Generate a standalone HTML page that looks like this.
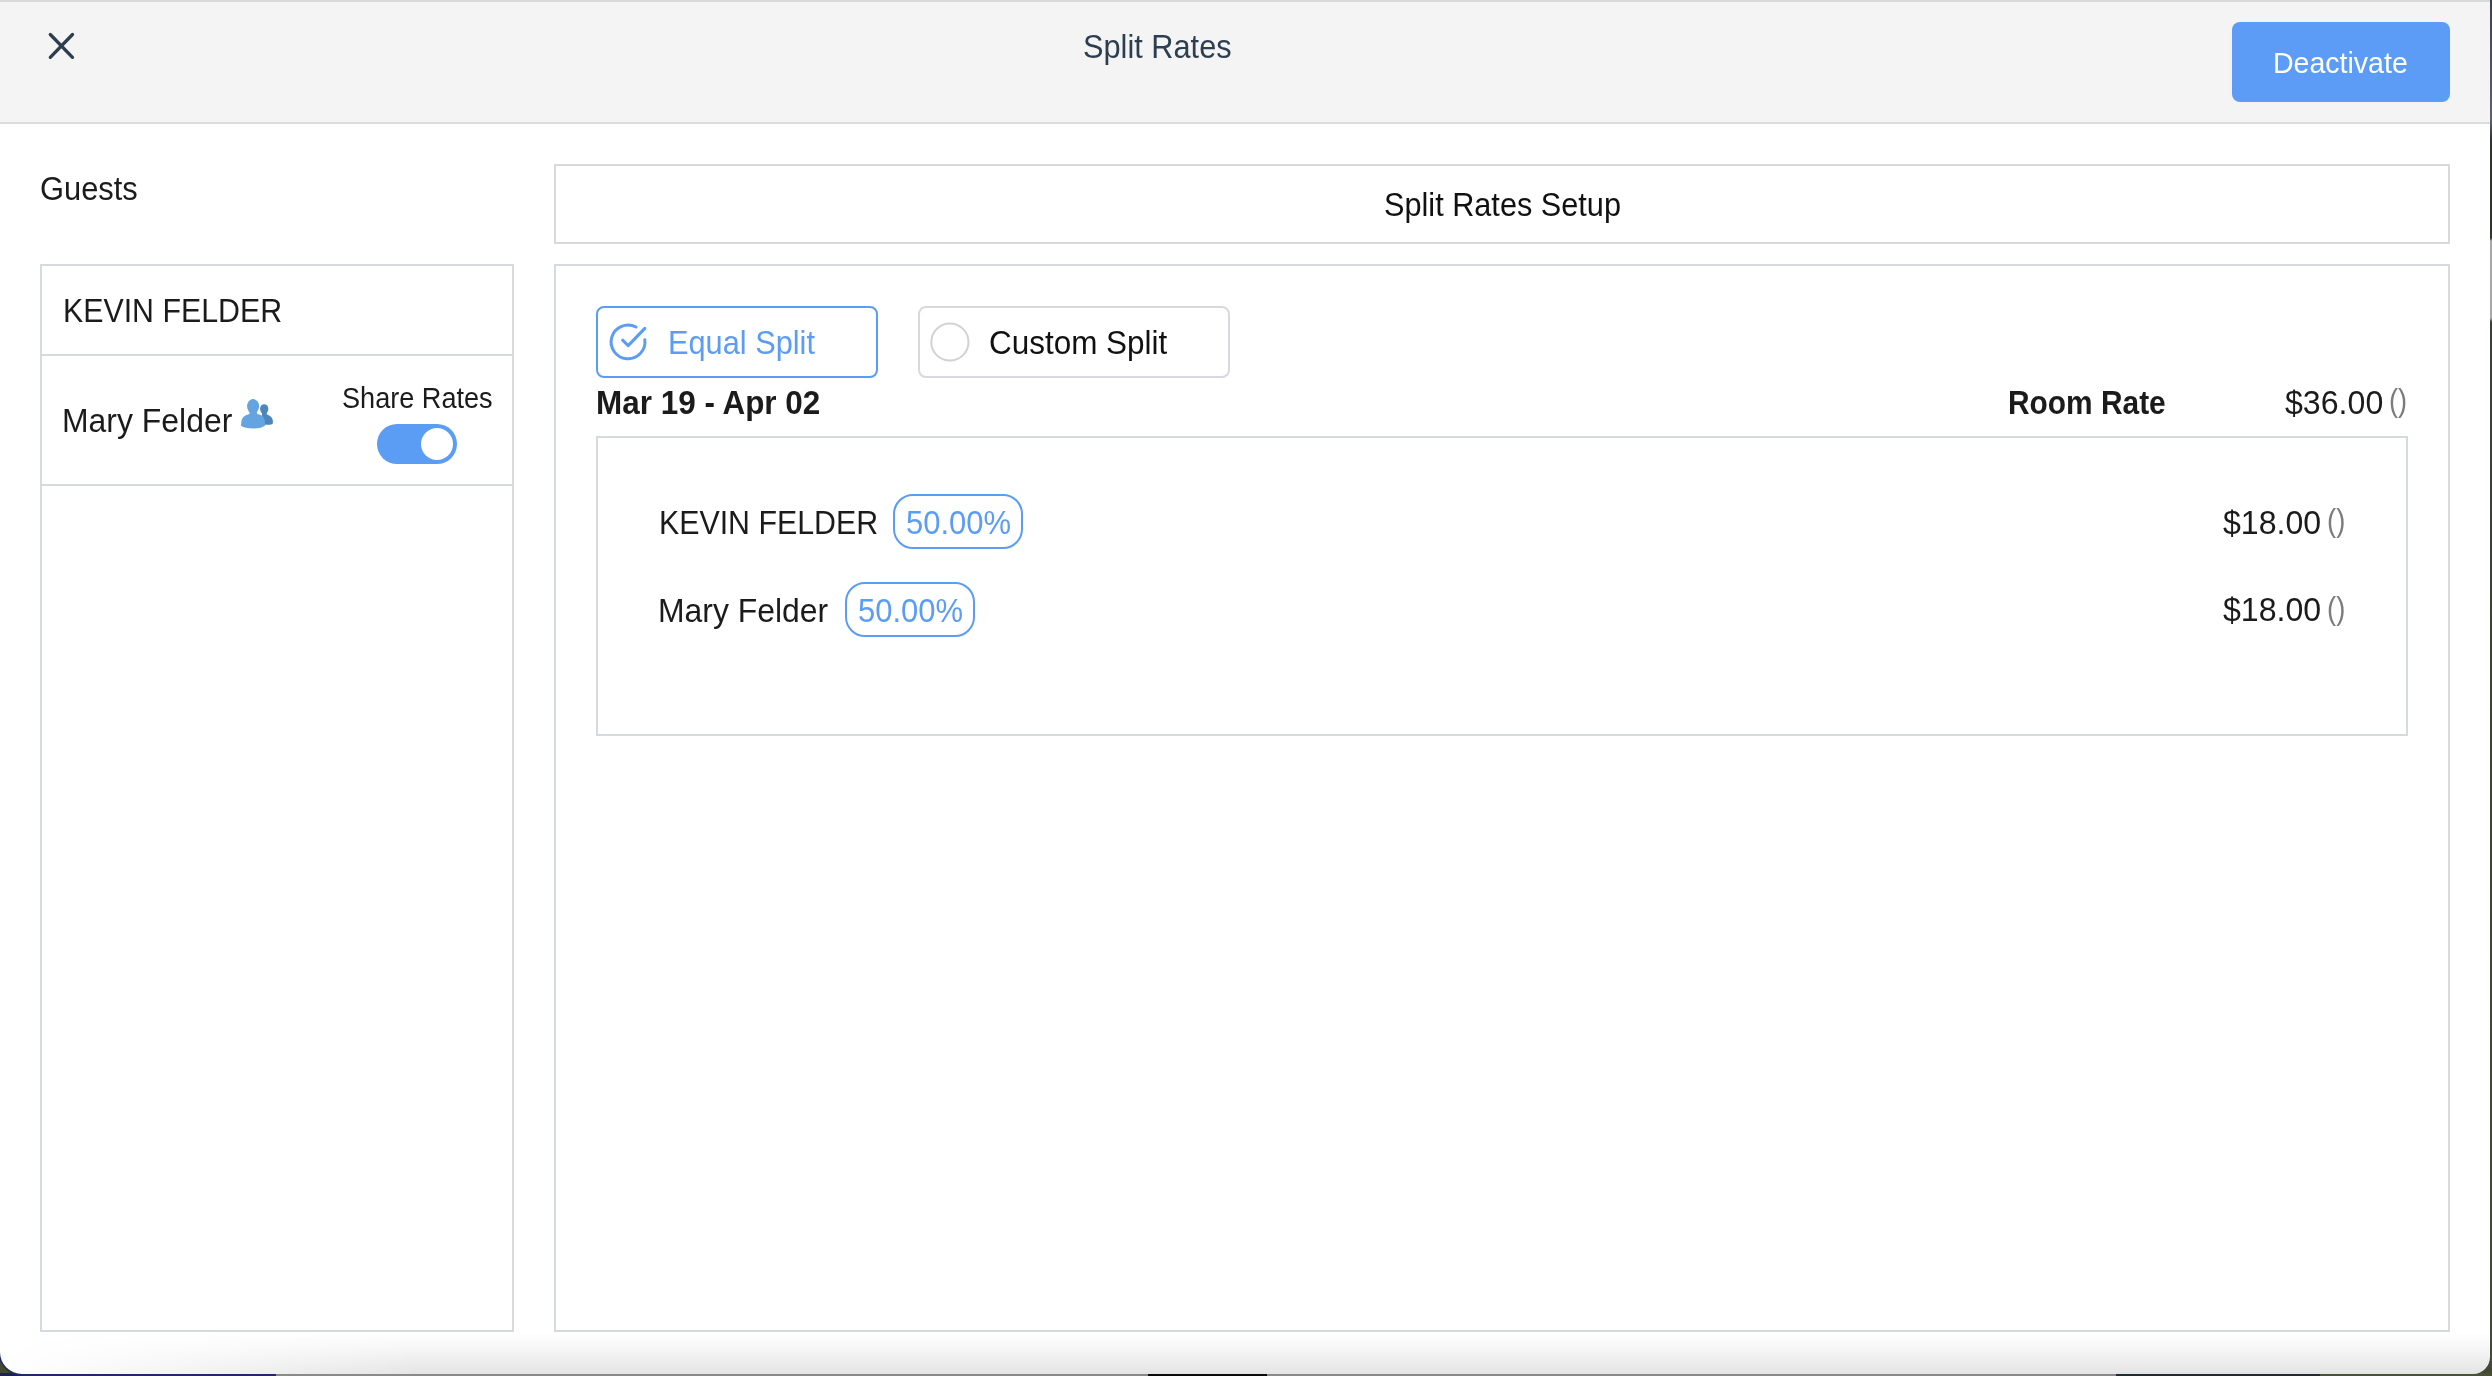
<!DOCTYPE html>
<html><head><meta charset="utf-8"><style>
html,body{margin:0;padding:0;width:2492px;height:1376px;overflow:hidden}
body{position:relative;background:#434932;font-family:"Liberation Sans",sans-serif}
.t{position:absolute;white-space:nowrap;line-height:1;transform-origin:0 0}
.b{position:absolute}
#strip{position:absolute;left:0;top:1373px;width:2492px;height:3px;background:linear-gradient(90deg,#1c2253 0,#1c2253 276px,#8a8a8a 276px,#8a8a8a 1148px,#0a0a0a 1148px,#0a0a0a 1267px,#8a8a8a 1267px,#8a8a8a 2116px,#22293a 2116px,#22293a 2320px,#4a5236 2320px)}
#rstrip{position:absolute;left:2490px;top:0;width:2px;height:1376px;background:linear-gradient(180deg,#3a4250 0,#5a6270 120px,#2e3430 140px,#2e3430 238px,#a8a8a8 241px,#a8a8a8 318px,#3a4030 322px,#444a34 1376px)}
#win{position:absolute;left:0;top:0;width:2490px;height:1373.5px;background:#fff;border-radius:0 0 17px 22px;overflow:hidden}
#hdr{position:absolute;left:0;top:0;width:2490px;height:120px;background:#f4f4f4;border-top:2px solid #d9dadb;border-bottom:2px solid #dcdddd}
#shade{position:absolute;left:0;top:1332px;width:2490px;height:42px;background:linear-gradient(180deg,rgba(0,0,0,0) 0,rgba(0,0,0,0.035) 40%,rgba(0,0,0,0.105) 100%);-webkit-mask-image:linear-gradient(90deg,transparent 0,#000 420px);mask-image:linear-gradient(90deg,transparent 0,#000 420px)}
#navyc{position:absolute;left:-2px;top:1320px;width:278px;height:56px;background:#1f2a66;border-radius:0 0 0 25px}
</style></head><body>
<div id="strip"></div><div id="rstrip"></div><div id="navyc"></div>
<div id="win">
<div id="hdr"></div>
<div id="shade"></div>
<div class="b" style="left:2232px;top:22px;width:218px;height:80px;border-radius:8px;background:#5c9cf6"></div>
<div class="b" style="left:40px;top:264px;width:470px;height:1064px;border:2px solid #d6d9de;"></div>
<div class="b" style="left:42px;top:354px;width:470px;height:2px;background:#d6d9de"></div>
<div class="b" style="left:42px;top:484px;width:470px;height:2px;background:#d6d9de"></div>
<div class="b" style="left:554px;top:164px;width:1892px;height:76px;border:2px solid #d9d9d9;"></div>
<div class="b" style="left:554px;top:264px;width:1892px;height:1064px;border:2px solid #d6d9de;"></div>
<div class="b" style="left:596px;top:306px;width:278px;height:68px;border:2px solid #5b9cf5;border-radius:8px;"></div>
<div class="b" style="left:918px;top:306px;width:308px;height:68px;border:2px solid #d8d9e0;border-radius:8px;"></div>
<div class="b" style="left:596px;top:436px;width:1808px;height:296px;border:2px solid #d6d9de;"></div>
<div class="b" style="left:893px;top:494px;width:126px;height:50.5px;border:2px solid #5b9cf5;border-radius:20px;"></div>
<div class="b" style="left:845px;top:582px;width:126px;height:50.5px;border:2px solid #5b9cf5;border-radius:20px;"></div>
<div class="b" style="left:377px;top:424px;width:80px;height:40px;border-radius:20px;background:#5b9cf5"></div>
<div class="b" style="left:420.8px;top:427.8px;width:32.2px;height:32.2px;border-radius:50%;background:#fff"></div>
<svg class="b" style="left:0;top:0" width="2492" height="1376" viewBox="0 0 2492 1376">
 <path d="M50.3 34.5 L72.5 57.3 M72.5 34.5 L50.3 57.3" stroke="#2c3e50" stroke-width="3.3" stroke-linecap="round" fill="none"/>
 <path d="M636.0 327.0 A16.9 16.9 0 1 0 644.8 339.8" stroke="#5b9cf5" stroke-width="3" stroke-linecap="round" fill="none"/>
 <path d="M622.6 340.2 L628.2 345.6 L644.8 328.4" stroke="#5b9cf5" stroke-width="3" stroke-linecap="round" stroke-linejoin="round" fill="none"/>
 <circle cx="949.9" cy="342" r="18.6" stroke="#d2d2d2" stroke-width="2" fill="none"/>
 <ellipse cx="264.2" cy="409" rx="4.15" ry="4.8" fill="#4d86b9"/>
 <path d="M262 412.5 L266.8 412.5 L266.8 414.4 C268 414.8 270 415.5 271.6 417.6 C272.8 419.3 273.2 421.5 272.8 423.4 C272 424.6 270.5 424.7 268 424.7 L262 424.7 Z" fill="#4d86b9"/>
 <ellipse cx="253.1" cy="406.3" rx="6.0" ry="7.2" fill="#64a4e0"/>
 <path d="M249.5 410 L257 410 L257 414 C258.5 414.2 260.3 414.6 262 415.8 C263.8 417.2 264.7 419 264.9 421.5 L265 425.6 C262.5 427.8 259 428.5 253.5 428.5 C247.5 428.5 243.5 427.6 241.1 425.8 C241 423.5 241.2 421.2 241.9 419.2 C242.8 417 244.8 415.3 249.5 414 Z" fill="#64a4e0"/>
</svg>
<div class="t" style="left:1082.56px;top:30.07px;font-size:33.33px;font-weight:400;color:#2c3e50;transform:scaleX(0.9221)">Split Rates</div>
<div class="t" style="left:2273.32px;top:48.07px;font-size:29.57px;font-weight:400;color:#ffffff;transform:scaleX(0.9647)">Deactivate</div>
<div class="t" style="left:39.66px;top:171.57px;font-size:33.33px;font-weight:400;color:#1b1b1b;transform:scaleX(0.9253)">Guests</div>
<div class="t" style="left:62.67px;top:293.87px;font-size:33.33px;font-weight:400;color:#1b1b1b;transform:scaleX(0.9097)">KEVIN FELDER</div>
<div class="t" style="left:62.15px;top:403.67px;font-size:33.33px;font-weight:400;color:#1b1b1b;transform:scaleX(0.9578)">Mary Felder</div>
<div class="t" style="left:341.65px;top:383.02px;font-size:29.86px;font-weight:400;color:#1b1b1b;transform:scaleX(0.9075)">Share Rates</div>
<div class="t" style="left:1383.67px;top:188.12px;font-size:33.33px;font-weight:400;color:#111111;transform:scaleX(0.9201)">Split Rates Setup</div>
<div class="t" style="left:668.34px;top:326.31px;font-size:33.04px;font-weight:400;color:#5b9cf5;transform:scaleX(0.9305)">Equal Split</div>
<div class="t" style="left:989.43px;top:325.57px;font-size:33.33px;font-weight:400;color:#111111;transform:scaleX(0.9439)">Custom Split</div>
<div class="t" style="left:595.80px;top:385.57px;font-size:33.33px;font-weight:700;color:#1b1b1b;transform:scaleX(0.9436)">Mar 19 - Apr 02</div>
<div class="t" style="left:2008.11px;top:385.57px;font-size:33.33px;font-weight:700;color:#1b1b1b;transform:scaleX(0.8965)">Room Rate</div>
<div class="t" style="left:2284.58px;top:385.57px;font-size:33.33px;font-weight:400;color:#1b1b1b;transform:scaleX(0.9638)">$36.00</div>
<div class="t" style="left:2389.27px;top:385.39px;font-size:33.33px;color:#7c7c7c;transform:scale(0.8167,0.9287)">()</div>
<div class="t" style="left:658.57px;top:505.57px;font-size:33.33px;font-weight:400;color:#1b1b1b;transform:scaleX(0.9097)">KEVIN FELDER</div>
<div class="t" style="left:905.66px;top:505.57px;font-size:33.33px;font-weight:400;color:#5b9cf5;transform:scaleX(0.9298)">50.00%</div>
<div class="t" style="left:658.25px;top:593.57px;font-size:33.33px;font-weight:400;color:#1b1b1b;transform:scaleX(0.9567)">Mary Felder</div>
<div class="t" style="left:857.66px;top:593.57px;font-size:33.33px;font-weight:400;color:#5b9cf5;transform:scaleX(0.9298)">50.00%</div>
<div class="t" style="left:2222.58px;top:505.67px;font-size:33.33px;font-weight:400;color:#1b1b1b;transform:scaleX(0.9628)">$18.00</div>
<div class="t" style="left:2327.36px;top:505.35px;font-size:33.33px;color:#7c7c7c;transform:scale(0.8222,0.9383)">()</div>
<div class="t" style="left:2222.58px;top:593.17px;font-size:33.33px;font-weight:400;color:#1b1b1b;transform:scaleX(0.9628)">$18.00</div>
<div class="t" style="left:2327.36px;top:592.85px;font-size:33.33px;color:#7c7c7c;transform:scale(0.8222,0.9383)">()</div>
</div>
</body></html>
